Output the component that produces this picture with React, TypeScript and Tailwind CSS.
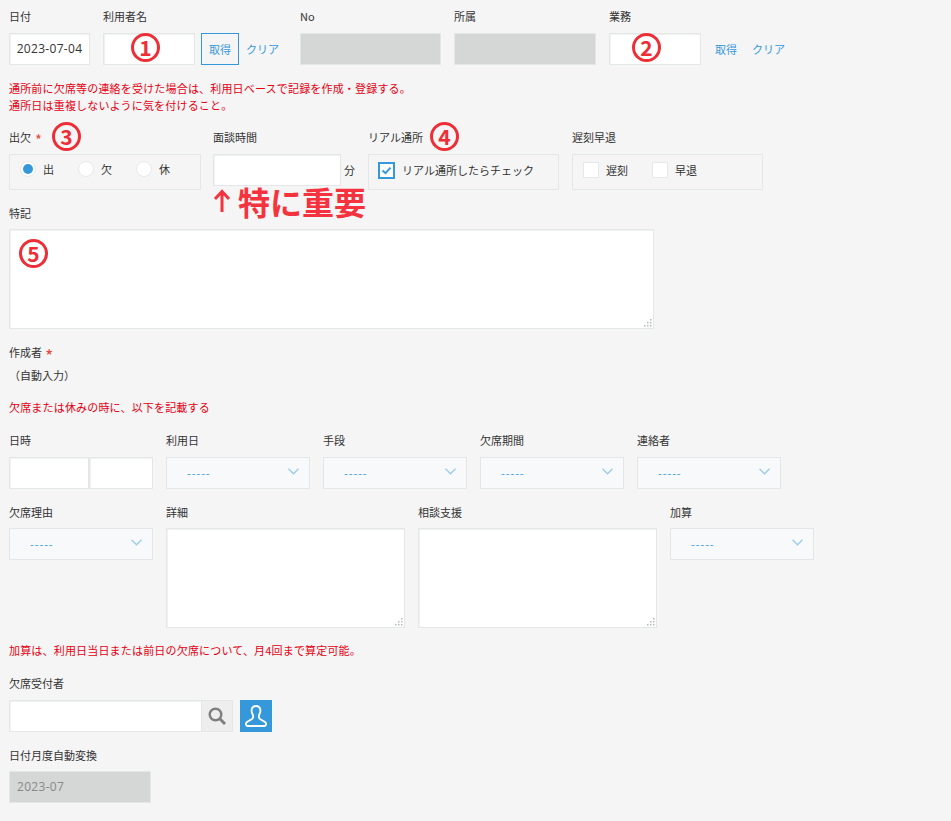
import type { ReactNode } from "react";

const inputBox = "block h-8 border border-[#e3e7e8] bg-white shadow-[inset_1px_1px_1px_#f0f1f1] outline-none";
const disabledBox = "block h-8 border border-[#e3e7e8] bg-[#d4d7d6]";

function Label({ children, tall = true }: { children: ReactNode; tall?: boolean }) {
  return (
    <div className={`flex items-center text-[11px] leading-none text-[#333] ${tall ? "h-[33px]" : "h-8"}`}>
      {children}
    </div>
  );
}

function Badge({ n, className }: { n: number; className: string }) {
  return (
    <span
      className={`absolute flex h-[29px] w-[29px] items-center justify-center rounded-full border-[3px] border-[#ee2e36] bg-transparent text-[21px] font-bold leading-none text-[#ee2e36] ${className}`}
    >
      {n}
    </span>
  );
}

function Notice({ children, className = "" }: { children: ReactNode; className?: string }) {
  return <p className={`text-[11px] leading-[17px] tracking-[0.18px] text-[#e60012] ${className}`}>{children}</p>;
}

function Radio({ label, checked }: { label: string; checked?: boolean }) {
  return (
    <label className="flex w-[58px] items-center">
      <span className="flex h-4 w-4 items-center justify-center rounded-full border border-[#e6e9ea] bg-white">
        {checked && <span className="h-[10px] w-[10px] rounded-full bg-[#3498db]" />}
      </span>
      <span className="ml-[7px] text-[11px] text-[#333]">{label}</span>
    </label>
  );
}

function Check({ label, checked, className = "" }: { label: string; checked?: boolean; className?: string }) {
  return (
    <label className={`flex items-center ${className}`}>
      <span
        className={`flex items-center justify-center bg-white ${
          checked ? "-ml-px h-[17px] w-[17px] border-2 border-[#3498db]" : "h-4 w-4 border border-[#e6e9ea]"
        }`}
      >
        {checked && (
          <svg width="13" height="13" viewBox="0 0 13 13" fill="none">
            <path d="M2.5 6.5 L5.5 9.2 L10.5 3.6" stroke="#3498db" strokeWidth="2" />
          </svg>
        )}
      </span>
      <span className="ml-[7px] text-[11px] text-[#333]">{label}</span>
    </label>
  );
}

function SelectBox({ className = "" }: { className?: string }) {
  return (
    <div className={`flex h-8 w-[144px] items-center justify-between border border-[#e3e7e8] bg-[#f7f9fa] pl-5 pr-[10px] ${className}`}>
      <span className="text-[11px] tracking-[0.9px] text-[#3498db]">-----</span>
      <svg width="11" height="7" viewBox="0 0 11 7" fill="none" className="-mt-1">
        <path d="M0.5 0.8 L5.5 5.8 L10.5 0.8" stroke="#9ccbe8" strokeWidth="1.3" />
      </svg>
    </div>
  );
}

function NoteArea({ className = "", children }: { className?: string; children?: ReactNode }) {
  return (
    <div className={`relative h-[100px] border border-[#e3e7e8] bg-white shadow-[inset_1px_1px_1px_#f0f1f1] ${className}`}>
      {children}
      <svg width="9" height="9" viewBox="0 0 9 9" className="absolute bottom-px right-px" fill="#b5b8b8">
        <rect x="7" y="1" width="1.5" height="1.5" />
        <rect x="4" y="4" width="1.5" height="1.5" />
        <rect x="7" y="4" width="1.5" height="1.5" />
        <rect x="1" y="7" width="1.5" height="1.5" />
        <rect x="4" y="7" width="1.5" height="1.5" />
        <rect x="7" y="7" width="1.5" height="1.5" />
      </svg>
    </div>
  );
}

export default function App() {
  return (
    <div className="h-[821px] overflow-hidden bg-[#f5f5f5] pl-[9px] font-['Noto_Sans_CJK_JP','Noto_Sans',sans-serif]">
      {/* top row */}
      <div className="flex gap-[13px]">
        <div className="w-[81px]">
          <Label>日付</Label>
          <div className={`${inputBox} flex items-center justify-center font-['Open_Sans',sans-serif] text-[12px] tracking-[0.3px] text-[#333]`}>2023-07-04</div>
        </div>
        <div className="w-[184px]">
          <Label>利用者名</Label>
          <div className="flex items-center">
            <div className="relative">
              <div className={`${inputBox} w-[92px]`} />
              <Badge n={1} className="left-[28px] top-0" />
            </div>
            <button type="button" className="ml-1.5 h-8 w-[38px] border border-[#3498db] text-[11px] text-[#3498db]">取得</button>
            <a className="ml-[7px] text-[11px] text-[#3498db]">クリア</a>
          </div>
        </div>
        <div className="w-[141px]">
          <Label>No</Label>
          <div className={disabledBox} />
        </div>
        <div className="w-[142px]">
          <Label>所属</Label>
          <div className={disabledBox} />
        </div>
        <div>
          <Label>業務</Label>
          <div className="flex items-center">
            <div className="relative">
              <div className={`${inputBox} w-[92px]`} />
              <Badge n={2} className="left-[23px] top-0" />
            </div>
            <a className="ml-[14px] text-[11px] text-[#3498db]">取得</a>
            <a className="ml-[15px] text-[11px] text-[#3498db]">クリア</a>
          </div>
        </div>
      </div>

      <Notice className="mt-[15px]">
        通所前に欠席等の連絡を受けた場合は、利用日ベースで記録を作成・登録する。
        <br />
        通所日は重複しないように気を付けること。
      </Notice>

      {/* attendance row */}
      <div className="mt-[7px] flex gap-[13px]">
        <div className="relative w-[192px]">
          <Label>
            出欠<span className="ml-[4px] mt-1 text-[15px] text-[#e74c3c]">*</span>
          </Label>
          <Badge n={3} className="left-[43px] top-px" />
          <div className="flex h-9 items-start border border-[#e3e7e8] pl-[10px] pt-[6px]">
            <Radio label="出" checked />
            <Radio label="欠" />
            <Radio label="休" />
          </div>
        </div>
        <div className="relative -ml-px w-[142px]">
          <Label>面談時間</Label>
          <div className="flex items-center">
            <div className={`${inputBox} w-[128px]`} />
            <span className="ml-[3px] text-[11px] text-[#333]">分</span>
          </div>
          <div className="absolute left-0 top-[63px] flex h-[33px] items-center whitespace-nowrap text-[32px] font-bold leading-none text-[#f5333f]">
            <svg width="18" height="24" viewBox="0 0 18 24" fill="none" className="mr-[7px]">
              <path d="M9 23 V3 M2 10 L9 2.5 L16 10" stroke="#f5333f" strokeWidth="3" />
            </svg>
            特に重要
          </div>
        </div>
        <div className="relative w-[191px]">
          <Label>リアル通所</Label>
          <Badge n={4} className="left-[62px] top-px" />
          <div className="flex h-9 items-start border border-[#e3e7e8] pl-[10px] pt-[7px]">
            <Check label="リアル通所したらチェック" checked />
          </div>
        </div>
        <div className="w-[191px]">
          <Label>遅刻早退</Label>
          <div className="flex h-9 items-start border border-[#e3e7e8] pl-[10px] pt-[7px]">
            <Check label="遅刻" className="w-[69px]" />
            <Check label="早退" />
          </div>
        </div>
      </div>

      <div className="mt-[7px] w-[645px]">
        <Label tall={false}>特記</Label>
        <NoteArea>
          <Badge n={5} className="left-[9px] top-[9px]" />
        </NoteArea>
      </div>

      <div className="mt-[14px] flex h-[18px] items-center text-[11px] text-[#333]">
        作成者<span className="ml-[3px] mt-[5px] text-[18px] leading-none text-[#e74c3c]">*</span>
      </div>
      <div className="mt-[5px] h-[18px] text-[11px] leading-[18px] text-[#333]">（自動入力）</div>

      <Notice className="mt-[14px] h-[18px] leading-[18px]">欠席または休みの時に、以下を記載する</Notice>

      {/* absence rows */}
      <div className="mt-[8px] flex gap-[13px]">
        <div className="w-[144px]">
          <Label>日時</Label>
          <div className="flex">
            <div className={`${inputBox} w-20`} />
            <div className={`${inputBox} w-16`} />
          </div>
        </div>
        <div>
          <Label>利用日</Label>
          <SelectBox />
        </div>
        <div>
          <Label>手段</Label>
          <SelectBox />
        </div>
        <div>
          <Label>欠席期間</Label>
          <SelectBox />
        </div>
        <div>
          <Label>連絡者</Label>
          <SelectBox />
        </div>
      </div>

      <div className="mt-[7px] flex gap-[13px]">
        <div>
          <Label tall={false}>欠席理由</Label>
          <SelectBox />
        </div>
        <div className="w-[239px]">
          <Label tall={false}>詳細</Label>
          <NoteArea />
        </div>
        <div className="w-[239px]">
          <Label tall={false}>相談支援</Label>
          <NoteArea />
        </div>
        <div>
          <Label tall={false}>加算</Label>
          <SelectBox />
        </div>
      </div>

      <Notice className="mt-[13px] h-[18px] leading-[18px]">加算は、利用日当日または前日の欠席について、月4回まで算定可能。</Notice>

      <div className="mt-2">
        <Label>欠席受付者</Label>
        <div className="flex">
          <div className={`${inputBox} w-[193px]`} />
          <div className="flex h-8 w-[31px] items-center justify-center border border-l-0 border-[#e3e7e8] bg-[#eeeeee]">
            <svg width="20" height="20" viewBox="0 0 20 20" fill="none">
              <circle cx="8.5" cy="8.5" r="5.8" stroke="#7f7f7f" strokeWidth="2.4" />
              <path d="M12.8 12.8 L18 18" stroke="#7f7f7f" strokeWidth="3" />
            </svg>
          </div>
          <div className="ml-[7px] h-8 w-8 bg-[#3498db]">
            <svg width="32" height="32" viewBox="0 0 32 32" fill="none">
              <path
                d="M12.5 14 C11 11.5 11 6 16 6 C21 6 21 11.5 19.5 14 C18.5 16 18.8 18 20 19 L25 22 C27 23.5 26 26 24.5 26 L7.5 26 C6 26 5 23.5 7 22 L12 19 C13.2 18 13.5 16 12.5 14 Z"
                stroke="#fff"
                strokeWidth="1.8"
              />
            </svg>
          </div>
        </div>
      </div>

      <div className="mt-[7px]">
        <Label tall={false}>日付月度自動変換</Label>
        <div className={`${disabledBox} flex w-[142px] items-center pl-[7px] font-['Open_Sans',sans-serif] text-[12px] tracking-[0.3px] text-[#888]`}>2023-07</div>
      </div>
    </div>
  );
}
